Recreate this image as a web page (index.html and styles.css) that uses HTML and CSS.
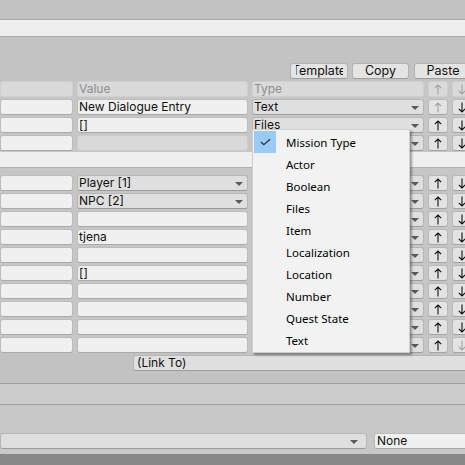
FILE: index.html
```html
<!DOCTYPE html>
<html>
<head>
<meta charset="utf-8">
<link rel="stylesheet" href="styles.css">
</head>
<body>
<div class="page">
  <div class="topbar"></div>
  <div class="strip"></div>
  <div class="toolbar">
    <div class="btn btn-template"><span class="clip"><span>Template</span></span></div>
    <div class="btn btn-copy">Copy</div>
    <div class="btn btn-paste">Paste</div>
  </div>

  <div class="grid grid-one">
    <div class="cell hdr"></div>
    <div class="cell hdr">Value</div>
    <div class="cell hdr">Type</div>
    <div class="cell abtn hdr-btn"><svg class="arr off" viewBox="0 0 8 11"><path d="M4 10.5V1M0.8 4.2L4 1L7.2 4.2"/></svg></div>
    <div class="cell abtn hdr-btn"><svg class="arr off" viewBox="0 0 8 11"><path d="M4 0.5V10M0.8 6.8L4 10L7.2 6.8"/></svg></div>

    <div class="cell field"></div>
    <div class="cell field">New Dialogue Entry</div>
    <div class="cell popup">Text</div>
    <div class="cell abtn"><svg class="arr off" viewBox="0 0 8 11"><path d="M4 10.5V1M0.8 4.2L4 1L7.2 4.2"/></svg></div>
    <div class="cell abtn"><svg class="arr" viewBox="0 0 8 11"><path d="M4 0.5V10M0.8 6.8L4 10L7.2 6.8"/></svg></div>

    <div class="cell field"></div>
    <div class="cell field">[]</div>
    <div class="cell popup">Files</div>
    <div class="cell abtn"><svg class="arr" viewBox="0 0 8 11"><path d="M4 10.5V1M0.8 4.2L4 1L7.2 4.2"/></svg></div>
    <div class="cell abtn"><svg class="arr" viewBox="0 0 8 11"><path d="M4 0.5V10M0.8 6.8L4 10L7.2 6.8"/></svg></div>

    <div class="cell field"></div>
    <div class="cell dis"></div>
    <div class="cell popup"></div>
    <div class="cell abtn"><svg class="arr" viewBox="0 0 8 11"><path d="M4 10.5V1M0.8 4.2L4 1L7.2 4.2"/></svg></div>
    <div class="cell abtn"><svg class="arr" viewBox="0 0 8 11"><path d="M4 0.5V10M0.8 6.8L4 10L7.2 6.8"/></svg></div>
  </div>

  <div class="band"></div>

  <div class="grid grid-two">
    <div class="cell field"></div>
    <div class="cell popup">Player [1]</div>
    <div class="cell popup"></div>
    <div class="cell abtn"><svg class="arr" viewBox="0 0 8 11"><path d="M4 10.5V1M0.8 4.2L4 1L7.2 4.2"/></svg></div>
    <div class="cell abtn"><svg class="arr" viewBox="0 0 8 11"><path d="M4 0.5V10M0.8 6.8L4 10L7.2 6.8"/></svg></div>

    <div class="cell field"></div>
    <div class="cell popup">NPC [2]</div>
    <div class="cell popup"></div>
    <div class="cell abtn"><svg class="arr" viewBox="0 0 8 11"><path d="M4 10.5V1M0.8 4.2L4 1L7.2 4.2"/></svg></div>
    <div class="cell abtn"><svg class="arr" viewBox="0 0 8 11"><path d="M4 0.5V10M0.8 6.8L4 10L7.2 6.8"/></svg></div>

    <div class="cell field"></div>
    <div class="cell field"></div>
    <div class="cell popup"></div>
    <div class="cell abtn"><svg class="arr" viewBox="0 0 8 11"><path d="M4 10.5V1M0.8 4.2L4 1L7.2 4.2"/></svg></div>
    <div class="cell abtn"><svg class="arr" viewBox="0 0 8 11"><path d="M4 0.5V10M0.8 6.8L4 10L7.2 6.8"/></svg></div>

    <div class="cell field"></div>
    <div class="cell field">tjena</div>
    <div class="cell popup"></div>
    <div class="cell abtn"><svg class="arr" viewBox="0 0 8 11"><path d="M4 10.5V1M0.8 4.2L4 1L7.2 4.2"/></svg></div>
    <div class="cell abtn"><svg class="arr" viewBox="0 0 8 11"><path d="M4 0.5V10M0.8 6.8L4 10L7.2 6.8"/></svg></div>

    <div class="cell field"></div>
    <div class="cell field"></div>
    <div class="cell popup"></div>
    <div class="cell abtn"><svg class="arr" viewBox="0 0 8 11"><path d="M4 10.5V1M0.8 4.2L4 1L7.2 4.2"/></svg></div>
    <div class="cell abtn"><svg class="arr" viewBox="0 0 8 11"><path d="M4 0.5V10M0.8 6.8L4 10L7.2 6.8"/></svg></div>

    <div class="cell field"></div>
    <div class="cell field">[]</div>
    <div class="cell popup"></div>
    <div class="cell abtn"><svg class="arr" viewBox="0 0 8 11"><path d="M4 10.5V1M0.8 4.2L4 1L7.2 4.2"/></svg></div>
    <div class="cell abtn"><svg class="arr" viewBox="0 0 8 11"><path d="M4 0.5V10M0.8 6.8L4 10L7.2 6.8"/></svg></div>

    <div class="cell field"></div>
    <div class="cell field"></div>
    <div class="cell popup"></div>
    <div class="cell abtn"><svg class="arr" viewBox="0 0 8 11"><path d="M4 10.5V1M0.8 4.2L4 1L7.2 4.2"/></svg></div>
    <div class="cell abtn"><svg class="arr" viewBox="0 0 8 11"><path d="M4 0.5V10M0.8 6.8L4 10L7.2 6.8"/></svg></div>

    <div class="cell field"></div>
    <div class="cell field"></div>
    <div class="cell popup"></div>
    <div class="cell abtn"><svg class="arr" viewBox="0 0 8 11"><path d="M4 10.5V1M0.8 4.2L4 1L7.2 4.2"/></svg></div>
    <div class="cell abtn"><svg class="arr" viewBox="0 0 8 11"><path d="M4 0.5V10M0.8 6.8L4 10L7.2 6.8"/></svg></div>

    <div class="cell field"></div>
    <div class="cell field"></div>
    <div class="cell popup"></div>
    <div class="cell abtn"><svg class="arr" viewBox="0 0 8 11"><path d="M4 10.5V1M0.8 4.2L4 1L7.2 4.2"/></svg></div>
    <div class="cell abtn"><svg class="arr" viewBox="0 0 8 11"><path d="M4 0.5V10M0.8 6.8L4 10L7.2 6.8"/></svg></div>

    <div class="cell field"></div>
    <div class="cell field"></div>
    <div class="cell popup"></div>
    <div class="cell abtn"><svg class="arr" viewBox="0 0 8 11"><path d="M4 10.5V1M0.8 4.2L4 1L7.2 4.2"/></svg></div>
    <div class="cell abtn"><svg class="arr off" viewBox="0 0 8 11"><path d="M4 0.5V10M0.8 6.8L4 10L7.2 6.8"/></svg></div>
  </div>

  <div class="linkrow">
    <div class="cell popup link">(Link To)</div>
  </div>

  <div class="sec-a"></div>
  <div class="sec-b">
    <div class="cell popup wide"></div>
    <div class="cell field none">None</div>
  </div>
  <div class="footer"></div>

  <div class="menu">
    <div class="item checked"><span class="tick"><svg viewBox="0 0 12 8"><path d="M1 4L4.2 7L11 1"/></svg></span>Mission Type</div>
    <div class="item"><span class="tick"></span>Actor</div>
    <div class="item"><span class="tick"></span>Boolean</div>
    <div class="item"><span class="tick"></span>Files</div>
    <div class="item"><span class="tick"></span>Item</div>
    <div class="item"><span class="tick"></span>Localization</div>
    <div class="item"><span class="tick"></span>Location</div>
    <div class="item"><span class="tick"></span>Number</div>
    <div class="item"><span class="tick"></span>Quest State</div>
    <div class="item"><span class="tick"></span>Text</div>
  </div>
</div>
</body>
</html>
```

FILE: styles.css
```css
html, body {
  margin: 0;
  padding: 0;
  width: 465px;
  height: 465px;
  overflow: hidden;
  background: #c4c4c4;
}

.page {
  position: relative;
  width: 472px;
  height: 465px;
  display: flex;
  flex-direction: column;
  font-family: Inter, "Noto Sans", sans-serif;
  font-size: 12px;
  color: #101010;
}

.topbar {
  height: 19px;
  background: #c2c2c2;
  border-bottom: 1px solid #a9a9a9;
  flex: none;
}

.strip {
  height: 16px;
  background: #eeeeee;
  border-bottom: 1px solid #a9a9a9;
  flex: none;
}

.toolbar {
  height: 42px;
  padding-bottom: 2px;
  background: #c3c3c3;
  display: flex;
  justify-content: flex-end;
  align-items: flex-end;
  flex: none;
}

.btn {
  height: 14px;
  line-height: 14px;
  border: 1px solid #b3b3b3;
  border-bottom-color: #9e9e9e;
  border-radius: 3px;
  background: #e4e4e4;
  display: flex;
  justify-content: center;
  overflow: hidden;
  white-space: nowrap;
  font-size: 12.5px;
}

.btn-template { width: 56px; margin-right: 4px; }
.btn-copy { width: 55px; margin-right: 5px; }
.btn-paste { width: 56px; }

.clip {
  width: 47px;
  display: flex;
  justify-content: center;
  overflow: hidden;
  flex: none;
}

.clip span {
  flex: none;
}

.grid {
  display: grid;
  grid-template-columns: 73px 171px 172px 20px 20px;
  grid-auto-rows: 16px;
  column-gap: 4px;
  row-gap: 2px;
  background: #c6c6c6;
  flex: none;
}

.grid-one {
  padding-bottom: 1px;
}

.band {
  height: 15px;
  background: #efefef;
  border-bottom: 1px solid #b0b0b0;
  flex: none;
}

.grid-two {
  padding-top: 7px;
}

.cell {
  box-sizing: border-box;
  height: 16px;
  border: 1px solid #bcbcbc;
  border-bottom-color: #a9a9a9;
  border-radius: 3px;
  padding-left: 1px;
  line-height: 14px;
  white-space: nowrap;
  overflow: hidden;
  position: relative;
}

.field {
  background: #f0f0f0;
}

.dis {
  background: #d9d9d9;
  border-color: #cccccc;
}

.hdr {
  background: #dadada;
  border-color: #d0d0d0;
  color: #8e8e8e;
}

.popup {
  background: #dfdfdf;
  border-color: #b6b6b6;
  border-bottom-color: #9c9c9c;
}

.popup::after {
  content: "";
  position: absolute;
  right: 4px;
  top: 6px;
  border-left: 4px solid transparent;
  border-right: 4px solid transparent;
  border-top: 4px solid #5a5a5a;
}

.link::after {
  display: none;
}

.abtn {
  background: #e3e3e3;
  border-color: #b8b8b8;
  border-bottom-color: #a3a3a3;
  padding: 0;
  display: flex;
  align-items: center;
  justify-content: center;
}

.hdr-btn {
  background: #d9d9d9;
  border-color: #cfcfcf;
}

.arr {
  width: 8px;
  height: 11px;
  fill: none;
  stroke: #111111;
  stroke-width: 1.1;
}

.arr.off {
  stroke: #a2a2a2;
}

.linkrow {
  display: flex;
  padding-top: 2px;
  padding-left: 133px;
  height: 28px;
  background: #c2c2c2;
  border-bottom: 1px solid #9e9e9e;
  flex: none;
}

.link {
  flex: 1;
  padding-left: 3px;
}

.sec-a {
  height: 20px;
  background: #cbcbcb;
  border-bottom: 1px solid #9e9e9e;
  flex: none;
}

.sec-b {
  height: 49px;
  box-sizing: border-box;
  padding-top: 28px;
  background: #c8c8c8;
  display: flex;
  gap: 7px;
  flex: none;
}

.wide {
  width: 367px;
  flex: none;
}

.wide::after {
  right: 8px;
}

.none {
  flex: 1;
  padding-left: 2px;
}

.footer {
  flex: 1;
  background: #888888;
}

.menu {
  position: absolute;
  left: 252px;
  top: 129px;
  width: 155px;
  padding: 1px 0 1px 1px;
  background: #f2f2f2;
  border: 1px solid #cfcfcf;
  box-shadow: 2px 2px 2px rgba(0, 0, 0, 0.35);
  font-family: "Noto Sans", "Open Sans", sans-serif;
  font-size: 11.5px;
  color: #000000;
}

.item {
  height: 22px;
  display: flex;
  align-items: center;
}

.tick {
  width: 22px;
  height: 22px;
  margin-right: 10px;
  display: flex;
  align-items: center;
  justify-content: center;
  flex: none;
}

.checked .tick {
  background: #99cbf5;
}

.tick svg {
  width: 11px;
  height: 8px;
  fill: none;
  stroke: #333333;
  stroke-width: 1.4;
}
```
